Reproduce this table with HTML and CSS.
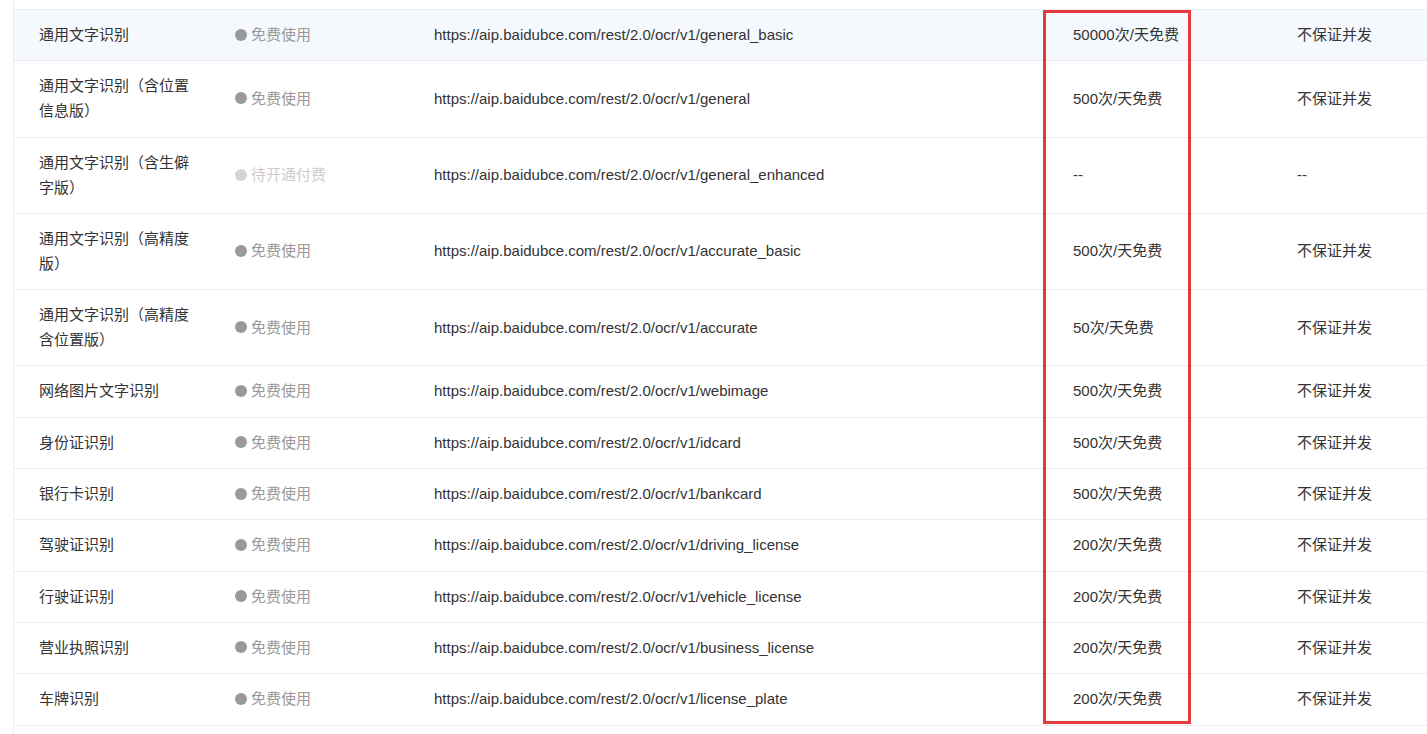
FILE: index.html
```html
<!DOCTYPE html>
<html lang="zh-CN">
<head>
<meta charset="utf-8">
<title>OCR API</title>
<link rel="stylesheet" href="styles.css">
</head>
<body>
<div class="page">
  <div class="table">
    <div class="row hl">
      <div class="c name">通用文字识别</div>
      <div class="c status"><span class="dot"></span>免费使用</div>
      <div class="c url">https://aip.baidubce.com/rest/2.0/ocr/v1/general_basic</div>
      <div class="c quota">50000次/天免费</div>
      <div class="c conc">不保证并发</div>
    </div>
    <div class="row">
      <div class="c name">通用文字识别（含位置信息版）</div>
      <div class="c status"><span class="dot"></span>免费使用</div>
      <div class="c url">https://aip.baidubce.com/rest/2.0/ocr/v1/general</div>
      <div class="c quota">500次/天免费</div>
      <div class="c conc">不保证并发</div>
    </div>
    <div class="row">
      <div class="c name">通用文字识别（含生僻字版）</div>
      <div class="c status pending"><span class="dot"></span>待开通付费</div>
      <div class="c url">https://aip.baidubce.com/rest/2.0/ocr/v1/general_enhanced</div>
      <div class="c quota">--</div>
      <div class="c conc">--</div>
    </div>
    <div class="row">
      <div class="c name">通用文字识别（高精度版）</div>
      <div class="c status"><span class="dot"></span>免费使用</div>
      <div class="c url">https://aip.baidubce.com/rest/2.0/ocr/v1/accurate_basic</div>
      <div class="c quota">500次/天免费</div>
      <div class="c conc">不保证并发</div>
    </div>
    <div class="row">
      <div class="c name">通用文字识别（高精度含位置版）</div>
      <div class="c status"><span class="dot"></span>免费使用</div>
      <div class="c url">https://aip.baidubce.com/rest/2.0/ocr/v1/accurate</div>
      <div class="c quota">50次/天免费</div>
      <div class="c conc">不保证并发</div>
    </div>
    <div class="row">
      <div class="c name">网络图片文字识别</div>
      <div class="c status"><span class="dot"></span>免费使用</div>
      <div class="c url">https://aip.baidubce.com/rest/2.0/ocr/v1/webimage</div>
      <div class="c quota">500次/天免费</div>
      <div class="c conc">不保证并发</div>
    </div>
    <div class="row">
      <div class="c name">身份证识别</div>
      <div class="c status"><span class="dot"></span>免费使用</div>
      <div class="c url">https://aip.baidubce.com/rest/2.0/ocr/v1/idcard</div>
      <div class="c quota">500次/天免费</div>
      <div class="c conc">不保证并发</div>
    </div>
    <div class="row">
      <div class="c name">银行卡识别</div>
      <div class="c status"><span class="dot"></span>免费使用</div>
      <div class="c url">https://aip.baidubce.com/rest/2.0/ocr/v1/bankcard</div>
      <div class="c quota">500次/天免费</div>
      <div class="c conc">不保证并发</div>
    </div>
    <div class="row">
      <div class="c name">驾驶证识别</div>
      <div class="c status"><span class="dot"></span>免费使用</div>
      <div class="c url">https://aip.baidubce.com/rest/2.0/ocr/v1/driving_license</div>
      <div class="c quota">200次/天免费</div>
      <div class="c conc">不保证并发</div>
    </div>
    <div class="row">
      <div class="c name">行驶证识别</div>
      <div class="c status"><span class="dot"></span>免费使用</div>
      <div class="c url">https://aip.baidubce.com/rest/2.0/ocr/v1/vehicle_license</div>
      <div class="c quota">200次/天免费</div>
      <div class="c conc">不保证并发</div>
    </div>
    <div class="row">
      <div class="c name">营业执照识别</div>
      <div class="c status"><span class="dot"></span>免费使用</div>
      <div class="c url">https://aip.baidubce.com/rest/2.0/ocr/v1/business_license</div>
      <div class="c quota">200次/天免费</div>
      <div class="c conc">不保证并发</div>
    </div>
    <div class="row">
      <div class="c name">车牌识别</div>
      <div class="c status"><span class="dot"></span>免费使用</div>
      <div class="c url">https://aip.baidubce.com/rest/2.0/ocr/v1/license_plate</div>
      <div class="c quota">200次/天免费</div>
      <div class="c conc">不保证并发</div>
    </div>
  </div>
  <div class="mark"></div>
</div>
</body>
</html>
```
FILE: styles.css
```css
html, body {
  margin: 0;
  padding: 0;
  background: #fff;
}
body {
  font-family: "Liberation Sans", "Noto Sans CJK SC", sans-serif;
  font-size: 15px;
  color: #333;
  overflow: hidden;
}
.page {
  position: relative;
  margin-left: 13px;
  border-left: 1px solid #eceff2;
  min-height: 734px;
  padding-top: 9px;
  box-sizing: border-box;
}
.table {
  border-top: 1px solid #e9eef3;
}
.row {
  display: grid;
  grid-template-columns: 196px 199px 639px 224px 1fr;
  border-bottom: 1px solid #ececec;
}
.row.hl {
  background: #f5f9fd;
}
.c {
  padding: 12px 10px 13.3px 25px;
  line-height: 25px;
  display: flex;
  align-items: center;
}
.name {
  padding-right: 11px;
}
.status {
  color: #999;
}
.status.pending {
  color: #ccc;
}
.dot {
  width: 12px;
  height: 12px;
  border-radius: 50%;
  background: #999;
  margin-right: 4px;
  flex: none;
}
.pending .dot {
  background: #d5d5d5;
}
.mark {
  position: absolute;
  left: 1029px;
  top: 10px;
  width: 142px;
  height: 708px;
  border: 3px solid #e53a3c;
}
```
